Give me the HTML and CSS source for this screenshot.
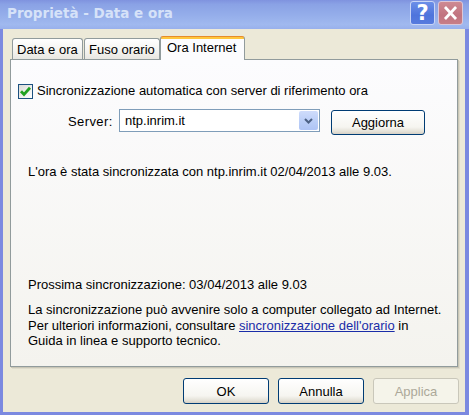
FILE: index.html
```html
<!DOCTYPE html>
<html lang="it">
<head>
<meta charset="utf-8">
<title>Proprietà - Data e ora</title>
<link rel="stylesheet" href="styles.css">
</head>
<body>
<div class="window">
  <div class="titlebar">
    <span class="title">Proprietà - Data e ora</span>
    <div class="caption-buttons">
      <div class="cbtn help">?</div>
      <div class="cbtn close">
        <svg width="25" height="24" viewBox="0 0 25 24"><path d="M6.5 5.5 L18.5 18.5 M18.5 5.5 L6.5 18.5" stroke="#fff" stroke-width="3" fill="none"/></svg>
      </div>
    </div>
  </div>
  <div class="client">
    <div class="tabs">
      <div class="tab t1">Data e ora</div>
      <div class="tab t2">Fuso orario</div>
      <div class="tab active">Ora Internet</div>
    </div>
    <div class="panel">
      <div class="check-row">
        <span class="checkbox">
          <svg width="13" height="13" viewBox="0 0 13 13"><path d="M2 6.2 L5 9.4 L11 2.8" stroke="#21A121" stroke-width="2.8" fill="none"/></svg>
        </span>
        <span>Sincronizzazione automatica con server di riferimento ora</span>
      </div>
      <div class="server-row">
        <span class="label">Server:</span>
        <div class="combo">
          <span class="combo-text">ntp.inrim.it</span>
          <div class="drop">
            <svg width="9" height="6" viewBox="0 0 9 6"><path d="M1 1 L4.5 4.5 L8 1" stroke="#4D6185" stroke-width="2" fill="none"/></svg>
          </div>
        </div>
        <div class="btn update">Aggiorna</div>
      </div>
      <p class="status">L'ora è stata sincronizzata con ntp.inrim.it 02/04/2013 alle 9.03.</p>
      <p class="next">Prossima sincronizzazione: 03/04/2013 alle 9.03</p>
      <p class="info">La sincronizzazione può avvenire solo a computer collegato ad Internet.<br>Per ulteriori informazioni, consultare <a class="link">sincronizzazione dell'orario</a> in<br>Guida in linea e supporto tecnico.</p>
    </div>
    <div class="footer">
      <div class="btn">OK</div>
      <div class="btn">Annulla</div>
      <div class="btn disabled">Applica</div>
    </div>
  </div>
</div>
</body>
</html>
```
FILE: styles.css
```css
html, body {
  margin: 0;
  padding: 0;
}
body {
  font-family: "Liberation Sans", Arial, sans-serif;
  font-size: 13px;
  color: #000;
}
.window {
  width: 469px;
  height: 415px;
  display: flex;
  flex-direction: column;
  box-sizing: border-box;
  background: #7B89E0;
}
.titlebar {
  height: 29px;
  flex: none;
  display: flex;
  justify-content: space-between;
  align-items: flex-start;
  background: linear-gradient(to bottom, #7F93DF 0%, #8AA2E5 15%, #94ADEA 50%, #A0B9EF 85%, #98B0EC 100%);
  box-sizing: border-box;
  padding-left: 7px;
}
.title {
  font-family: "DejaVu Sans", sans-serif;
  font-weight: bold;
  font-size: 13.5px;
  line-height: 16px;
  padding-top: 5px;
  color: #D6E2F8;
}
.caption-buttons {
  display: flex;
  gap: 3px;
  margin-top: 1px;
  margin-right: 6px;
}
.cbtn {
  width: 25px;
  height: 24px;
  box-sizing: border-box;
  border-radius: 3px;
  border: 1px solid #C9D5F6;
  display: flex;
  align-items: center;
  justify-content: center;
}
.help {
  background: linear-gradient(to bottom, #6C8FE8, #4E74DC 60%, #577BDE);
  color: #fff;
  font-family: "DejaVu Sans", sans-serif;
  font-weight: bold;
  font-size: 21px;
  line-height: 22px;
}
.close {
  background: linear-gradient(to bottom, #CE8A92, #C17480 60%, #C77E87);
  border-color: #DCC6D6;
}
.close svg {
  display: block;
}
.client {
  flex: 1;
  margin: 0 4px 3px 3px;
  background: #ECE9D8;
  padding: 7px 7px 0 7px;
  display: flex;
  flex-direction: column;
}
.tabs {
  height: 23px;
  display: flex;
  align-items: flex-end;
  padding-left: 2px;
}
.tab {
  height: 21px;
  box-sizing: border-box;
  border: 1px solid #919B9C;
  border-bottom: none;
  border-radius: 3px 3px 0 0;
  background: linear-gradient(to bottom, #FFFFFF, #F3F3EF 60%, #E8E7E1);
  line-height: 16px;
  padding: 3px 0 0 4px;
  white-space: nowrap;
}
.t1 { width: 71px; }
.t2 { width: 76px; margin-left: 1px; }
.tab.active {
  width: 85px;
  height: 24px;
  margin-bottom: -1px;
  position: relative;
  z-index: 1;
  border-top: 1px solid #E68B2C;
  background: linear-gradient(to bottom, #FFC73C 0 2px, #FCFCFE 2px);
  padding: 3px 0 0 6px;
}
.panel {
  height: 308px;
  box-sizing: border-box;
  border: 1px solid #919B9C;
  background: linear-gradient(to bottom, #FCFCFE, #F4F3EE);
  box-shadow: 1px 1px 0 #C9C6B6, 2px 2px 0 #DEDBCB;
  display: flex;
  flex-direction: column;
  padding-left: 7px;
}
.check-row {
  margin-top: 23px;
  height: 16px;
  line-height: 16px;
  display: flex;
  align-items: center;
}
.checkbox {
  width: 15px;
  height: 15px;
  box-sizing: border-box;
  border: 1px solid #1C5180;
  background: linear-gradient(135deg, #DCDCD7, #FFFFFF);
  display: flex;
  align-items: center;
  justify-content: center;
  margin-right: 4px;
}
.checkbox svg { display: block; }
.server-row {
  margin-top: 10px;
  display: flex;
  align-items: flex-start;
  padding-left: 50px;
}
.label {
  width: 51px;
  line-height: 16px;
  margin-top: 5px;
  letter-spacing: 0.4px;
}
.combo {
  width: 201px;
  height: 23px;
  box-sizing: border-box;
  border: 1px solid #7F9DB9;
  background: #fff;
  display: flex;
  align-items: stretch;
  justify-content: space-between;
  padding: 1px;
}
.combo-text {
  line-height: 19px;
  padding-left: 4px;
}
.drop {
  width: 19px;
  border-radius: 2px;
  background: linear-gradient(to bottom, #CFDCFB, #B9CDF7 60%, #AFC4F5);
  display: flex;
  align-items: center;
  justify-content: center;
}
.drop svg { display: block; }
.btn {
  width: 86px;
  height: 26px;
  box-sizing: border-box;
  border: 1px solid #003C74;
  border-radius: 3px;
  background: linear-gradient(to bottom, #FFFFFF, #F6F5F0 70%, #E3E0D6 90%, #D6D0C5);
  display: flex;
  align-items: center;
  justify-content: center;
}
.btn.update {
  width: 94px;
  height: 25px;
  margin-left: 11px;
  margin-top: 1px;
}
.btn.disabled {
  border-color: #C9C7BA;
  background: #F5F4EA;
  color: #ACA899;
}
p {
  margin: 0;
  line-height: 16px;
  padding-left: 10px;
}
.status {
  margin-top: 29px;
}
.next {
  margin-top: 97px;
}
.info {
  margin-top: 9px;
  line-height: 15.5px;
}
.link {
  color: #1A2DA8;
  text-decoration: underline;
}
.footer {
  display: flex;
  justify-content: flex-end;
  gap: 9px;
  margin-top: 11px;
  margin-right: -1px;
}
```
